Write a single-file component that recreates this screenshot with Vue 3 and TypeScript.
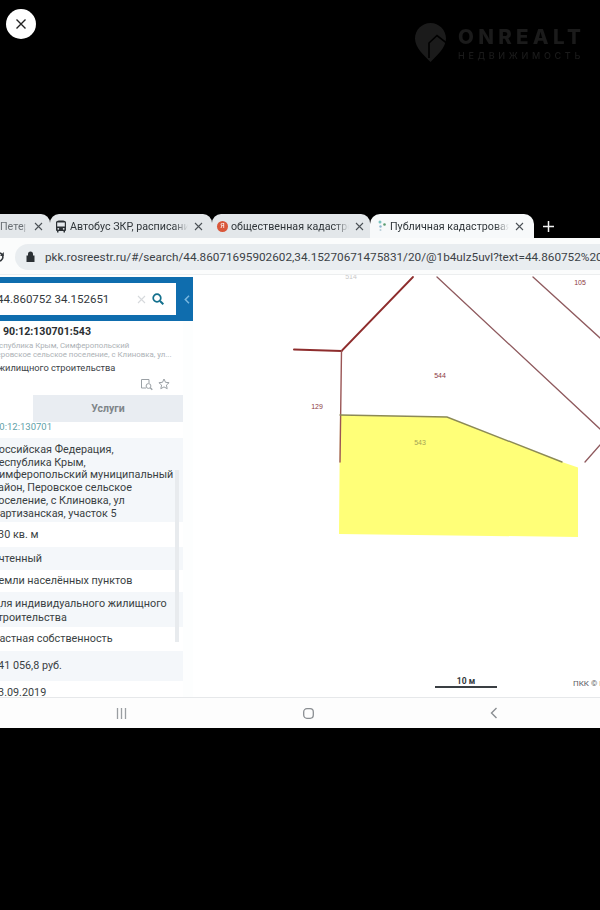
<script setup lang="ts">
interface Tab { title: string; kind: 'none' | 'bus' | 'ya' | 'pkk'; active?: boolean; width: number }
interface Row { text: string[]; tone: 'light' | 'plain' }

const tabs: Tab[] = [
  { title: 'Петербург', kind: 'none', width: 50 },
  { title: 'Автобус ЗКР, расписание', kind: 'bus', width: 162 },
  { title: 'общественная кадастровая', kind: 'ya', width: 158 },
  { title: 'Публичная кадастровая карта', kind: 'pkk', active: true, width: 164 },
]

const rows: Row[] = [
  { text: ['Российская Федерация,', 'Республика Крым,', 'Симферопольский муниципальный', 'район, Перовское сельское', 'поселение, с Клиновка, ул', 'Партизанская, участок 5'], tone: 'light' },
  { text: ['630 кв. м'], tone: 'plain' },
  { text: ['Учтенный'], tone: 'light' },
  { text: ['Земли населённых пунктов'], tone: 'plain' },
  { text: ['Для индивидуального жилищного', 'строительства'], tone: 'light' },
  { text: ['Частная собственность'], tone: 'plain' },
  { text: ['341 056,8 руб.'], tone: 'light' },
  { text: ['23.09.2019'], tone: 'plain' },
]
</script>

<template>
  <div class="page">
    <header class="top">
      <button class="close" aria-label="Закрыть">
        <svg width="12" height="12" viewBox="0 0 12 12"><path d="M1.5 1.5l9 9M10.5 1.5l-9 9" stroke="#222" stroke-width="1.4" fill="none" /></svg>
      </button>
      <div class="logo">
        <svg width="31" height="39" viewBox="0 0 31 39">
          <path d="M15.500 0C7 0 0 7 0 15.500c0 9 9 17 15.500 23.500C22 32.500 31 24.500 31 15.500 31 7 24 0 15.500 0z" fill="#1b1b1b" />
          <path d="M14 35V20l8-7.500 9 7" fill="none" stroke="#000" stroke-width="1.600" />
        </svg>
        <div class="logo-text">
          <span class="logo-name">ONREALT</span>
          <span class="logo-sub">НЕДВИЖИМОСТЬ</span>
        </div>
      </div>
    </header>

    <div class="shot">
      <div class="tabs">
        <div
          v-for="tab in tabs"
          :key="tab.title"
          class="tab"
          :class="['k-' + tab.kind, { active: tab.active }]"
          :style="{ width: tab.width + 'px' }"
        >
          <svg v-if="tab.kind === 'bus'" class="ticon" width="12" height="13" viewBox="0 0 12 13">
            <path d="M1 2.500C1 1 2.500.5 6 .5s5 .5 5 2V10a1 1 0 0 1-1 1v1.500H8.500V11h-5v1.500H2V11a1 1 0 0 1-1-1z" fill="#2b3034" />
            <rect x="2.200" y="2.500" width="7.600" height="4" fill="#e4e8ec" />
            <circle cx="3.300" cy="8.800" r=".9" fill="#e4e8ec" /><circle cx="8.700" cy="8.800" r=".9" fill="#e4e8ec" />
          </svg>
          <span v-else-if="tab.kind === 'ya'" class="ya">Я</span>
          <svg v-else-if="tab.kind === 'pkk'" class="ticon" width="10" height="12" viewBox="0 0 10 12">
            <circle cx="3" cy="2" r="1.500" fill="#7cc4c0" /><circle cx="7.500" cy="4.500" r="1.300" fill="#5b9c72" /><circle cx="3.500" cy="6.500" r="1.200" fill="#8fb7cf" /><circle cx="3.500" cy="10" r="1" fill="#b8cfd8" />
          </svg>
          <span class="ttitle">{{ tab.title }}</span>
          <svg class="tclose" width="9" height="9" viewBox="0 0 9 9"><path d="M1 1l7 7M8 1l-7 7" stroke="#4c5257" stroke-width="1.100" fill="none" /></svg>
        </div>
        <svg class="plus" width="11" height="11" viewBox="0 0 11 11"><path d="M5.500 0v11M0 5.500h11" stroke="#f2f2f2" stroke-width="1.500" /></svg>
      </div>

      <div class="urlbar">
        <svg class="reload" width="4" height="12" viewBox="0 0 4 12"><path d="M-3 2.500a4 4 0 1 1 0 7" stroke="#33383c" stroke-width="1.600" fill="none" /><path d="M3.800 1v4H0z" fill="#33383c" /></svg>
        <div class="pill">
          <svg width="9" height="11" viewBox="0 0 9 11"><path d="M2 4.500V3a2.500 2.500 0 0 1 5 0v1.500h1.500V11H.5V4.500z" fill="#2b3034" /></svg>
          <span class="url">pkk.rosreestr.ru/#/search/44.86071695902602,34.15270671475831/20/@1b4ulz5uvl?text=44.860752%20</span>
        </div>
      </div>

      <main class="content">
        <aside class="side">
          <div class="searchbar">
            <div class="search">
              <span class="query">44.860752 34.152651</span>
              <svg width="9" height="9" viewBox="0 0 9 9"><path d="M1 1l7 7M8 1l-7 7" stroke="#d6d9dc" stroke-width="1.100" /></svg>
              <svg width="12" height="12" viewBox="0 0 12 12"><circle cx="5" cy="5" r="3.800" stroke="#13708d" stroke-width="1.700" fill="none" /><path d="M8 8l3.300 3.300" stroke="#13708d" stroke-width="2" /></svg>
            </div>
            <svg class="collapse" width="6" height="9" viewBox="0 0 6 9"><path d="M5 .8L1.300 4.500 5 8.200" stroke="#7ab8e0" stroke-width="1.500" fill="none" /></svg>
          </div>

          <div class="panel">
            <div class="summary">
              <div class="cad">90:12:130701:543</div>
              <div class="addr one">Республика Крым, Симферопольский</div>
              <div class="addr two">Перовское сельское поселение, с Клиновка, ул...</div>
              <div class="use">жилищного строительства</div>
              <div class="tools">
                <svg width="13" height="13" viewBox="0 0 13 13"><path d="M6 10H1.500V1.500H9V5" stroke="#9aa0a5" stroke-width="1" fill="none" /><circle cx="8.500" cy="8" r="2.400" stroke="#9aa0a5" stroke-width="1" fill="none" /><path d="M10.300 9.800l2 2" stroke="#9aa0a5" stroke-width="1.300" /></svg>
                <svg width="12" height="12" viewBox="0 0 12 12"><path d="M6 1l1.500 3.300 3.600.4-2.700 2.400.8 3.600L6 8.900l-3.200 1.800.8-3.600L.9 4.700l3.600-.4z" stroke="#9aa0a5" stroke-width="1" fill="none" /></svg>
              </div>
            </div>

            <div class="subtabs">
              <div class="sub-on"></div>
              <div class="sub-off">Услуги</div>
            </div>

            <div class="link">90:12:130701</div>

            <div class="rows">
              <div v-for="(row, i) in rows" :key="i" class="row" :class="[row.tone, 'r' + i]">
                <div v-for="line in row.text" :key="line">{{ line }}</div>
              </div>
              <div class="scroll"></div>
            </div>
          </div>
        </aside>

        <section class="map">
          <svg class="plan" viewBox="193 275 407 422" width="407" height="422">
            <polygon points="340,415 447,417 562,462 578,467.500 578,537 339,534" fill="#ffff78" />
            <g fill="none" stroke-linecap="round">
              <path d="M294 349.500L341.500 351" stroke="#8e2d2d" stroke-width="2" />
              <path d="M341.500 351L413 277" stroke="#8e2d2d" stroke-width="1.800" />
              <path d="M341.500 351L340 462" stroke="#9a5555" stroke-width="1.400" />
              <path d="M437 277L600 429M533 277L600 338M600 445L585 462" stroke="#8f5a5e" stroke-width="1.300" />
              <path d="M340 415L447 417L562 462" stroke="#8c8a55" stroke-width="1.400" />
            </g>
            <g class="labels">
              <text x="580" y="285">105</text>
              <text x="440" y="378">544</text>
              <text x="317" y="409">129</text>
              <text x="420" y="445" class="olive">543</text>
              <text x="351" y="279" class="faint">514</text>
            </g>
          </svg>
          <div class="scale">
            <span>10 м</span>
            <i></i>
          </div>
          <div class="credit">ПКК © Росреестр</div>
        </section>
      </main>

      <nav class="nav">
        <svg width="11" height="11" viewBox="0 0 11 11"><path d="M1.500 0v11M5.500 0v11M9.500 0v11" stroke="#9a9ea2" stroke-width="1.300" /></svg>
        <svg width="11" height="11" viewBox="0 0 11 11"><rect x=".7" y=".7" width="9.600" height="9.600" rx="3.200" stroke="#8a8e92" stroke-width="1.300" fill="none" /></svg>
        <svg width="8" height="12" viewBox="0 0 8 12"><path d="M6.500 1L1.500 6l5 5" stroke="#8a8e92" stroke-width="1.400" fill="none" /></svg>
      </nav>
    </div>
  </div>
</template>

<style>
html, body { margin: 0; background: #000; }
</style>

<style scoped>
.page {
  width: 600px;
  height: 910px;
  background: #000;
  overflow: hidden;
  font-family: Roboto, "Noto Sans", sans-serif;
}
.top {
  height: 214px;
  box-sizing: border-box;
  padding: 9px 18px 0 6px;
  display: flex;
  justify-content: space-between;
  align-items: flex-start;
}
.close {
  width: 30px;
  height: 30px;
  border: 0;
  padding: 0;
  border-radius: 50%;
  background: #fff;
  display: flex;
  align-items: center;
  justify-content: center;
}
.logo {
  display: flex;
  gap: 12px;
  margin-top: 14px;
  align-items: flex-start;
}
.logo-text {
  display: flex;
  flex-direction: column;
  width: 124px;
  color: #1b1b1b;
  font-family: Inter, Roboto, sans-serif;
  font-weight: 800;
  margin-top: 3px;
  filter: blur(0.4px);
}
.logo-name {
  font-size: 20.500px;
  line-height: 22px;
  letter-spacing: 4.300px;
  white-space: nowrap;
}
.logo-sub {
  font-size: 9px;
  line-height: 12px;
  letter-spacing: 3.700px;
  font-weight: 500;
  margin-top: 2px;
  white-space: nowrap;
}
.shot {
  height: 514px;
  display: flex;
  flex-direction: column;
  filter: blur(0.45px);
}
.tabs {
  height: 24px;
  display: flex;
  align-items: stretch;
  position: relative;
  overflow: hidden;
}
.tab {
  box-sizing: border-box;
  display: flex;
  align-items: center;
  gap: 3px;
  padding: 0 9px 0 5px;
  background: #e3e7ea;
  border-radius: 9px 9px 0 0;
  font-size: 10.700px;
  color: #30363a;
  white-space: nowrap;
  overflow: hidden;
}
.k-none {
  padding: 0 7px 0 0;
  border-radius: 0 9px 0 0;
  gap: 5px;
}
.k-none .ttitle {
  color: #6a7075;
}
.k-ya { padding-right: 6px; }
.tab.active {
  background: #f7f9fa;
  border-radius: 10px 10px 0 0;
  padding: 0 10px 0 7px;
}
.ticon { flex: none; }
.ya {
  width: 11px;
  height: 11px;
  flex: none;
  border-radius: 50%;
  background: #d9573a;
  color: #fff;
  font-size: 7px;
  line-height: 11px;
  text-align: center;
}
.ttitle {
  flex: 1;
  min-width: 0;
  overflow: hidden;
  -webkit-mask-image: linear-gradient(to right, #000 88%, transparent);
  mask-image: linear-gradient(to right, #000 88%, transparent);
}
.tclose { flex: none; margin-left: 3px; }
.plus { align-self: center; margin-left: 9px; }
.urlbar {
  height: 37px;
  background: #fbfcfc;
  display: flex;
  align-items: center;
  gap: 11px;
  border-bottom: 1px solid #eceeef;
  box-sizing: border-box;
  padding-top: 1px;
}
.reload { flex: none; }
.pill {
  flex: 1;
  min-width: 0;
  height: 26px;
  background: #e9edf0;
  border-radius: 13px 0 0 13px;
  display: flex;
  align-items: center;
  gap: 10px;
  padding-left: 11px;
  overflow: hidden;
}
.pill svg { flex: none; }
.url {
  font-size: 11.750px;
  color: #3c4247;
  white-space: nowrap;
}
.content {
  height: 422px;
  display: flex;
  background: #fff;
}
.side {
  width: 193px;
  flex: none;
  overflow: hidden;
  background: #fdfefe;
}
.searchbar {
  height: 44px;
  margin-top: 2px;
  background: #0f6dae;
  box-sizing: border-box;
  padding: 6px 0;
  display: flex;
  align-items: center;
}
.search {
  width: 176px;
  height: 32px;
  flex: none;
  box-sizing: border-box;
  background: #fff;
  display: flex;
  align-items: center;
  padding-right: 12px;
  gap: 6px;
  font-size: 11.500px;
  color: #33383c;
}
.query { flex: 1; margin-left: -3px; white-space: nowrap; }
.collapse { margin-left: 8px; }
.panel {
  width: 183px;
  height: 376px;
  overflow: hidden;
  background: #fff;
}
.summary {
  height: 74px;
  box-sizing: border-box;
  padding-top: 4px;
  white-space: nowrap;
  position: relative;
}
.cad {
  font-size: 10.600px;
  line-height: 14px;
  font-weight: 700;
  color: #2a2e31;
  padding-left: 3px;
}
.addr {
  line-height: 8.500px;
  color: #adb2b6;
  font-size: 7.850px;
}
.one {
  margin: 3px 0 0 -10px;
}
.two {
  margin-left: -9px;
}
.use {
  font-size: 9.300px;
  line-height: 13px;
  color: #3c4247;
  margin: 2px 0 0 -2px;
}
.tools {
  position: absolute;
  right: 13px;
  top: 57px;
  display: flex;
  gap: 5px;
}
.subtabs {
  height: 27px;
  display: flex;
}
.sub-on { width: 33px; }
.sub-off {
  flex: 1;
  background: #e9edf2;
  color: #7f8589;
  font-size: 10.500px;
  font-weight: 700;
  display: flex;
  align-items: center;
  justify-content: center;
}
.link {
  height: 16px;
  font-size: 9.500px;
  line-height: 9px;
  color: #5f9fa8;
  margin-left: -6px;
}
.rows {
  position: relative;
  font-size: 10.800px;
  line-height: 14.300px;
  color: #3a3f43;
  margin-left: -8px;
}
.row {
  box-sizing: border-box;
  padding: 5px 0 0 0;
  white-space: nowrap;
}
.row.light { background: #f4f7fa; }
.r0 { height: 84px; line-height: 12.700px; padding-top: 6px; }
.r1 { height: 25px; padding-top: 6px; }
.r2 { height: 23px; }
.r3 { height: 22px; padding-top: 4px; }
.r4 { height: 35px; }
.r5 { height: 24px; }
.r6 { height: 30px; padding-top: 8px; }
.r7 { height: 20px; padding-top: 5px; }
.scroll {
  position: absolute;
  left: 183px;
  top: 32px;
  width: 4px;
  height: 172px;
  background: #e8ebee;
}
.map {
  flex: 1;
  position: relative;
  overflow: hidden;
}
.plan { display: block; }
.labels text {
  font-family: "Liberation Sans", sans-serif;
  font-size: 7px;
  fill: #8c3a42;
  text-anchor: middle;
}
.labels .olive { fill: #a5a455; }
.labels .faint { fill: #c8c8c8; }
.scale {
  position: absolute;
  left: 242px;
  top: 401px;
  width: 62px;
  text-align: center;
  font-size: 8.500px;
  line-height: 10px;
  font-weight: 700;
  color: #33383c;
}
.scale i {
  display: block;
  height: 1.500px;
  background: #3a3f43;
  margin-top: 0;
}
.credit {
  position: absolute;
  left: 380px;
  top: 404px;
  font-size: 8px;
  line-height: 10px;
  color: #5b6065;
  white-space: nowrap;
}
.nav {
  height: 31px;
  box-sizing: border-box;
  background: #fdfdfd;
  border-top: 1px solid #e6e8ea;
  display: flex;
  align-items: center;
  padding: 0 102px 0 116px;
  justify-content: space-between;
}
</style>
